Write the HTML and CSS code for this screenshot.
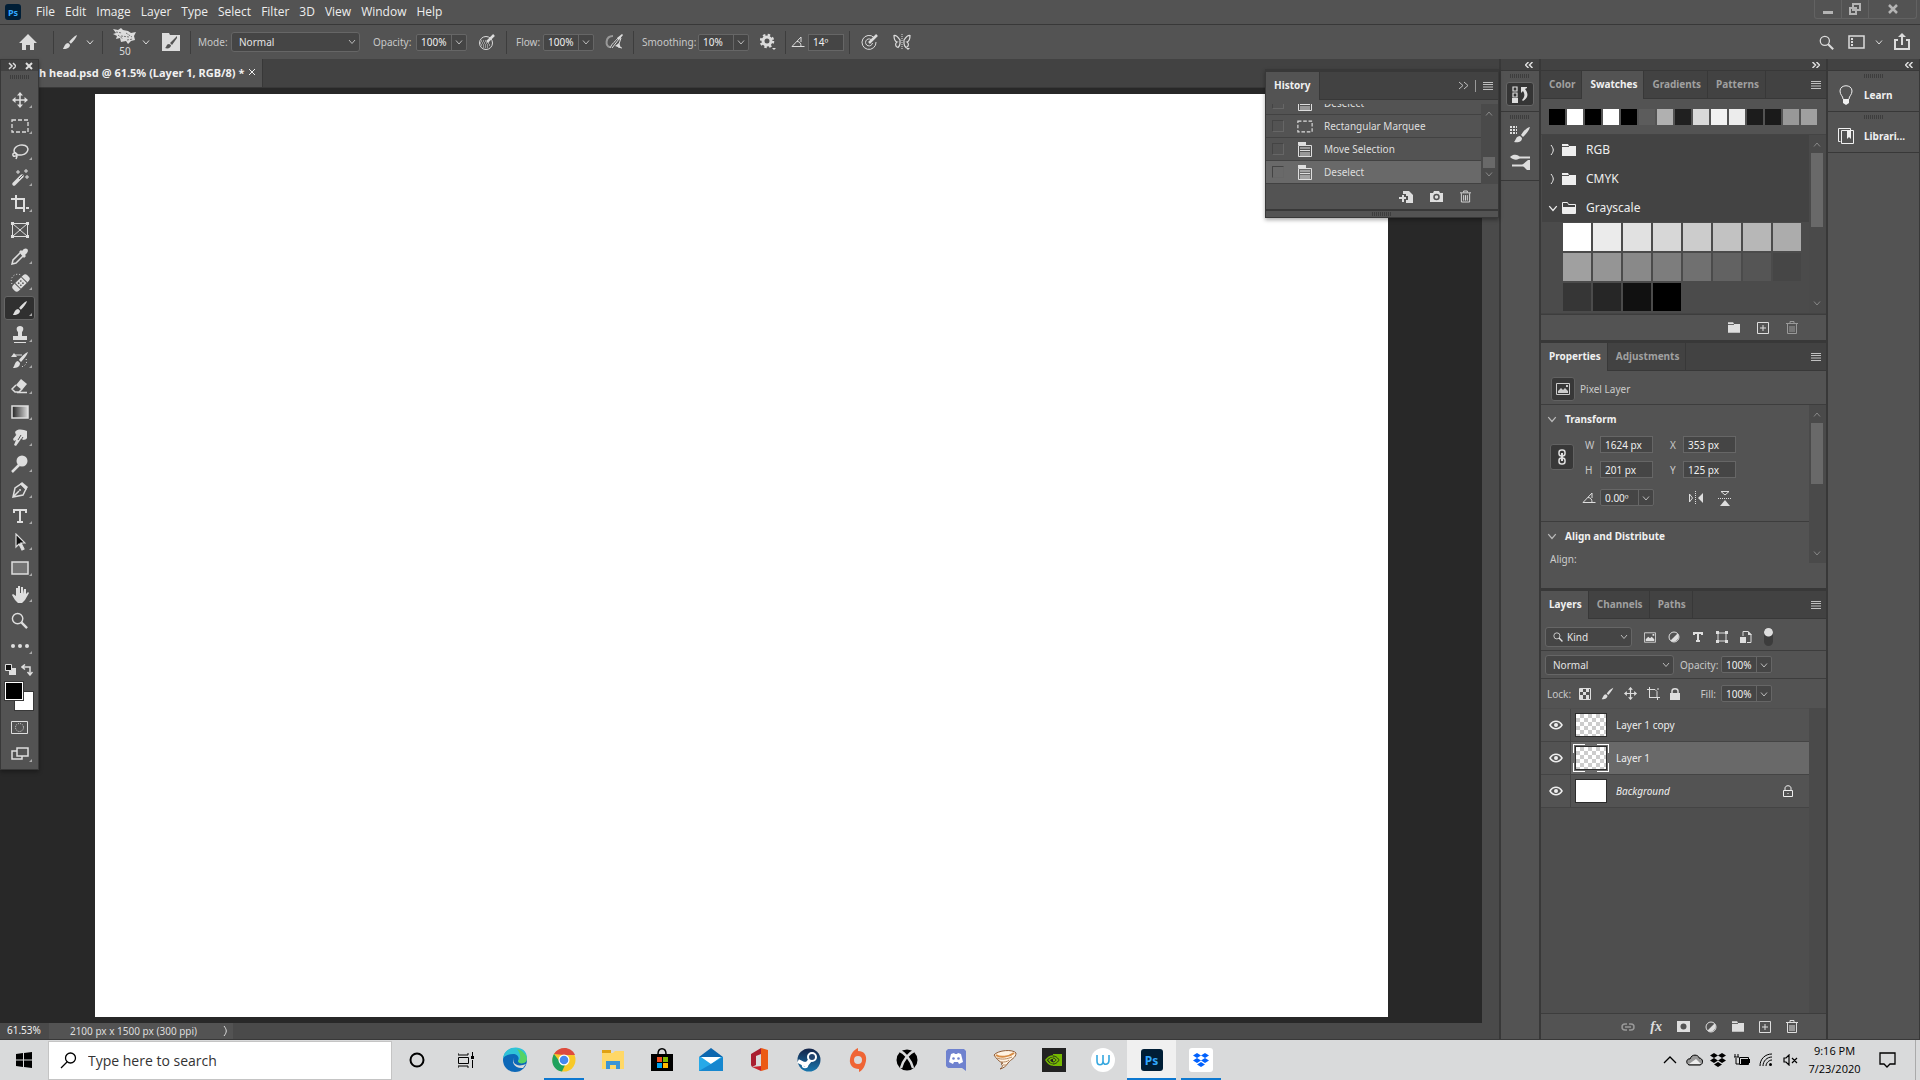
FILE: index.html
```html
<!DOCTYPE html>
<html lang="en">
<head>
    <meta charset="UTF-8">
    <meta name="viewport" content="width=device-width, initial-scale=1.0">
    <title>Photoshop</title>
    <link rel="stylesheet" href="styles.css">
</head>
<body>
    <!-- Shared icons -->
    <svg class="sprite" aria-hidden="true">
        <symbol id="brush" viewBox="0 0 18 18"><path class="solid" d="M17 1c-3 1-7 5-9 8l2 2c3-3 6-7 7-10zM7 10c-2 0-3 1-4 3l-2 4c3 0 8-1 8-5z"/></symbol>
        <symbol id="down" viewBox="0 0 8 8"><path d="M1 2.500l3 3.500 3-3.500"/></symbol>
        <symbol id="up" viewBox="0 0 8 8"><path d="M1 5.500l3-3.500 3 3.500"/></symbol>
        <symbol id="right" viewBox="0 0 8 10"><path d="M2 0c3 4 3 6 0 10"/></symbol>
        <symbol id="menu" viewBox="0 0 10 8"><path d="M0 .5h10M0 2.500h10M0 5h10M0 7.500h10"/></symbol>
        <symbol id="angle" viewBox="0 0 14 12"><path d="M10 1L1 10.500h12.500M6 5.500c3 0 4 2 4 5M10 1v5"/></symbol>
        <symbol id="doc" viewBox="0 0 14 15"><path class="solid" d="M0 0h8v3H0z"/><path d="M.5 3.500h13v11H.5zM2 6h10M2 8.500h10M2 11h10M2 13h10"/></symbol>
        <symbol id="marquee" viewBox="0 0 18 14"><path stroke-width="1.300" stroke-dasharray="4 2" d="M1 1h16v12H1z"/></symbol>
        <symbol id="trash" viewBox="0 0 12 13"><path d="M0 2.500h12M4 2V.5h4V2M1.500 3v9.500h9V3M4 5v6M6 5v6M8 5v6"/></symbol>
        <symbol id="folder" viewBox="0 0 14 12"><path class="solid" d="M0 0h6l1 2h7v10H0z"/><path stroke="#535353" d="M0 2.500h7"/></symbol>
        <symbol id="plus" viewBox="0 0 12 12"><path d="M.5.5h11v11H.5zM6 3v6M3 6h6"/></symbol>
        <symbol id="image" viewBox="0 0 14 12"><path d="M.5.5h13v11H.5z"/><path class="solid" d="M2 10V8l3-3 2 2 2-2 3 3v2zM10 2h2v2h-2z"/></symbol>
        <symbol id="half" viewBox="0 0 12 12"><circle cx="6" cy="6" r="5"/><path class="solid" d="M2.500 9.500l7-7A5 5 0 0 1 2.500 9.500z"/></symbol>
        <symbol id="move" viewBox="0 0 16 16"><path stroke-width="1.500" d="M8 1v14M1 8h14"/><path class="solid" d="M8 0l3 3.500H5zM8 16l3-3.500H5zM0 8l3.500-3v6zM16 8l-3.500-3v6z"/></symbol>
        <symbol id="mag" viewBox="0 0 18 18"><circle cx="7" cy="7" r="5.500" stroke-width="1.500"/><path stroke-width="2.500" d="M11 11l6 6"/></symbol>
        <symbol id="eye" viewBox="0 0 14 10"><path stroke-width="1.500" d="M1 5c3-5 9-5 12 0-3 5-9 5-12 0z"/><circle class="solid" cx="7" cy="5" r="2"/></symbol>
        <symbol id="target" viewBox="0 0 18 18"><path d="M13 4.500A7 7 0 1 0 15 9M10 6.500A3.500 3.500 0 1 0 11.500 10"/><path stroke-width="2.500" d="M8 10l8-8"/></symbol>
        <symbol id="dropbox" viewBox="0 0 16 14"><path class="solid" d="M4 0l4 2.500L4 5 0 2.500zM12 0l4 2.500L12 5 8 2.500zM4 5l4 2.500L4 10 0 7.500zM12 5l4 2.500-4 2.500-4-2.500zM8 9l4 2.500L8 14l-4-2.500z"/></symbol>
    </svg>

    <header class="menubar">
        <span class="ps-logo">Ps</span>
        <nav>
            <button>File</button><button>Edit</button><button>Image</button><button>Layer</button><button>Type</button><button>Select</button><button>Filter</button><button>3D</button><button>View</button><button>Window</button><button>Help</button>
        </nav>
        <div class="window-buttons">
            <button aria-label="Minimize"><svg width="12" height="12"><path stroke-width="3" d="M1 9.500h10"/></svg></button>
            <button aria-label="Restore"><svg width="12" height="12"><path stroke-width="2" d="M4 1h7v6H4zM1 5h6v6H1z"/></svg></button>
            <button class="close" aria-label="Close"><svg width="12" height="12"><path stroke-width="2.500" d="M2 2l8 8M10 2l-8 8"/></svg></button>
        </div>
    </header>

    <div class="options">
        <div class="group home">
            <button aria-label="Home"><svg width="18" height="16"><path class="solid" d="M9 0l9 9h-3v7h-4v-5H7v5H3V9H0z"/></svg></button>
        </div>
        <div class="group preset">
            <button aria-label="Brush tool"><svg width="16" height="16"><use href="#brush"/></svg></button>
            <button aria-label="Presets"><svg width="8" height="8"><use href="#down"/></svg></button>
        </div>
        <div class="group brush-size">
            <button class="tip" aria-label="Brush size"><svg width="26" height="17"><path class="solid" d="M1 1l5 1 3-2 2 2 5 1 3 2 5-1-2 4 1 4-4 1-3 3-2-3-5 1-1-4-4 1 1-3-4-2 3-1z"/><path stroke="#777" stroke-dasharray="2 1" d="M4 4l6 1M9 8l8 1M14 5l6 4M6 7l5 4M15 12l6-1"/></svg><span>50</span></button>
            <button aria-label="Brush picker"><svg width="8" height="8"><use href="#down"/></svg></button>
            <button class="folder-brush" aria-label="Brush settings"><svg width="18" height="18"><path class="solid" d="M0 0h7l1 2h10v16H0z"/><path fill="#535353" stroke="none" d="M15 3L8 10l2 2 5-7zM7 11c-3 0-2 3-4 4 3 1 6 0 6-3z"/></svg></button>
        </div>
        <div class="group mode">
            <label for="mode">Mode:</label>
            <select id="mode" class="drop"><option>Normal</option></select>
            <label for="opacity">Opacity:</label>
            <span class="combo"><input id="opacity" value="100%"><button aria-label="Opacity slider"><svg width="8" height="8"><use href="#down"/></svg></button></span>
            <button aria-label="Pressure opacity"><svg width="18" height="18"><circle cx="8" cy="10" r="6.500"/><path stroke-dasharray="1 1" d="M3 8h8M2 10h10M3 12h10M5 14h6"/><path stroke-width="2.500" d="M9 9l7-7"/></svg></button>
        </div>
        <div class="group flow">
            <label for="flow">Flow:</label>
            <span class="combo"><input id="flow" value="100%"><button aria-label="Flow slider"><svg width="8" height="8"><use href="#down"/></svg></button></span>
            <button aria-label="Airbrush"><svg width="18" height="18"><path stroke="#999" stroke-width="2" d="M8 3C0 3 0 14 5 14"/><path d="M5 15c2-5 5-6 9-11l2 1-3 9 4 1M7 15l7-9"/><path class="solid" d="M12 5l5-4 1 1-4 5zM10 13l4-3 2 5z"/></svg></button>
        </div>
        <div class="group smoothing">
            <label for="smooth">Smoothing:</label>
            <span class="combo"><input id="smooth" value="10%"><button aria-label="Smoothing slider"><svg width="8" height="8"><use href="#down"/></svg></button></span>
            <button aria-label="Smoothing options"><svg width="17" height="18"><circle cx="7" cy="8" r="4" stroke-width="3"/><path stroke-width="2.500" stroke-dasharray="2.400 2.310" d="M13 8A6 6 0 1 1 1 8a6 6 0 0 1 12 0"/><path class="solid" d="M12 15h4l-2 2z"/></svg></button>
        </div>
        <div class="group tilt">
            <svg width="14" height="12"><use href="#angle"/></svg>
            <input class="field" aria-label="Brush angle" value="14º">
        </div>
        <div class="group last">
            <button aria-label="Pressure size"><svg width="18" height="18"><use href="#target"/></svg></button>
            <button aria-label="Symmetry"><svg width="18" height="18"><path stroke-dasharray="1 1" d="M9 1v16"/><path stroke-width="1.200" d="M7 7C5 4 3 2 1 2.500c0 3 1 6 3 6.500-2 1-2 5 1 5.500 1-1 2-2 2-4zM11 7c2-3 4-5 6-4.500 0 3-1 6-3 6.500 2 1 2 5-1 5.500-1-1-2-2-2-4z"/><path class="solid" d="M13 15h4l-2 2z"/></svg></button>
        </div>
        <div class="options-right">
            <button class="find" aria-label="Search"><svg width="15" height="15"><use href="#mag"/></svg></button>
            <button aria-label="Workspace"><svg width="17" height="14"><path stroke-width="1.500" d="M1 1h15v12H1z"/><path stroke-width="2" stroke-dasharray="2 1" d="M4 3v8"/></svg></button>
            <button aria-label="Workspace list"><svg width="8" height="8"><use href="#down"/></svg></button>
            <button aria-label="Share"><svg width="18" height="18"><path stroke-width="2" d="M5 7H2v9h14V7h-3M9 12V3"/><path class="solid" d="M9 0l4 4H5z"/></svg></button>
        </div>
    </div>

    <div class="workspace">
        <main class="document">
            <div class="doc-tabs"><div class="doc-tab">h head.psd @ 61.5% (Layer 1, RGB/8) * <button aria-label="Close document"><svg width="8" height="8"><path d="M1 1l6 6M7 1l-6 6"/></svg></button></div></div>
            <div class="stage-row">
                <div class="stage"><div class="paper"></div></div>
                <div class="stage-scroll"></div>
            </div>
            <div class="status"><span class="zoom">61.53%</span><button>2100 px x 1500 px (300 ppi)<svg width="8" height="10"><use href="#right"/></svg></button></div>

            <aside class="tools">
                <div class="tools-head"><svg width="8" height="8"><path stroke-width="1.500" d="M1 1l3 3-3 3M5 1l3 3-3 3"/></svg><svg width="8" height="8"><path stroke-width="2" d="M1 1l6 6M7 1l-6 6"/></svg></div>
                <div class="grip"></div>
                <button class="tool" aria-label="Move"><svg width="16" height="16"><use href="#move"/></svg></button>
                <button class="tool" aria-label="Marquee"><svg width="18" height="14"><use href="#marquee"/></svg></button>
                <button class="tool" aria-label="Lasso"><svg width="18" height="18"><ellipse cx="10" cy="7" rx="7" ry="5" transform="rotate(-12 10 7)" stroke-width="1.500"/><path stroke-width="1.500" d="M5 10c-4-1-4 4-1 3 3 0 2-2 1-3 2 2 1 4 0 6"/></svg></button>
                <button class="tool" aria-label="Magic wand"><svg width="18" height="18"><path stroke-width="3.500" stroke-linecap="round" d="M3 15l8-8"/><path stroke="#535353" d="M8 10l4-4"/><path d="M7 1v4M5 3h4M15 0v4M13 2h4M16 6v4M14 8h4"/></svg></button>
                <button class="tool" aria-label="Crop"><svg width="18" height="18"><path stroke-width="2" d="M0 4h13v13M5 0v13h8M15 13h3"/></svg></button>
                <button class="tool plain" aria-label="Frame"><svg width="18" height="16"><path d="M1.500 1.500h15v13h-15zM2 2l14 12M16 2L2 14"/><path class="solid" d="M0 0h3v3H0zM15 0h3v3h-3zM0 13h3v3H0zM15 13h3v3h-3z"/></svg></button>
                <button class="tool" aria-label="Eyedropper"><svg width="18" height="18"><path class="solid" d="M8 5l2-2 1 1c3-5 8-2 5 2l-2 2 1 1-2 2z"/><path stroke-width="1.500" d="M9 6l-7 7-1 4 4-1 7-7"/></svg></button>
                <button class="tool" aria-label="Healing brush"><svg width="20" height="20"><path stroke-dasharray="1 2" d="M2 12C-1 6 5 0 11 3"/><g transform="rotate(-45 11 11)"><rect class="solid" x="1" y="7" width="20" height="8" rx="3"/><path stroke="#535353" d="M6.500 7v8M15.500 7v8"/><path stroke="#535353" stroke-width="1.500" stroke-dasharray="1.500 1.500" d="M8.500 9.500h6M8.500 12.500h6"/></g></svg></button>
                <button class="tool active" aria-label="Brush"><svg width="16" height="16"><use href="#brush"/></svg></button>
                <button class="tool" aria-label="Clone stamp"><svg width="16" height="17"><path class="solid" d="M8 0c4 0 4 4 2 6v4h5v4H1v-4h5V6C4 4 4 0 8 0z"/><path d="M2 16.500h12"/></svg></button>
                <button class="tool" aria-label="History brush"><svg width="18" height="18"><path class="solid" d="M17 1c-3 1-7 5-9 8l2 2c3-3 6-7 7-10zM7 10c-3 0-3 4-5 7 4 0 7-1 7-5zM0 6l3-4 3 4z"/><path d="M3 4h8"/><path stroke-dasharray="1 2" d="M15 8c2 4-1 7-5 8"/></svg></button>
                <button class="tool" aria-label="Eraser"><svg width="18" height="16"><path class="solid" d="M10 1l6 5-5 6-6-5z"/><path stroke-width="1.500" d="M5 7l-4 4 3 3h4l3-3M6 14.500h10"/></svg></button>
                <button class="tool" aria-label="Gradient"><svg width="18" height="14"><linearGradient id="grad"><stop stop-color="#222"/><stop offset="1" stop-color="#ddd"/></linearGradient><path fill="url(#grad)" stroke-width="1.500" d="M1 1h16v12H1z"/></svg></button>
                <button class="tool" aria-label="Smudge"><svg width="16" height="18"><path class="solid" d="M3 3c3-4 9-2 12-1v7c-1 2-2 1-3 2l-3-1-5 7-2-1 2-5-2 1-1-2 4-5-1 1z"/><path stroke="#535353" d="M9 6l-3 5M11 8l-2 3"/></svg></button>
                <button class="tool" aria-label="Dodge"><svg width="18" height="18"><circle class="solid" cx="11" cy="6" r="5.500"/><path stroke-width="2.500" d="M8 10l-7 7"/></svg></button>
                <button class="tool" aria-label="Pen"><svg width="18" height="18"><path stroke-width="1.500" d="M10 3l5 5-3 6-10 2 2-9zM2 16l6-6"/><path class="solid" d="M11 1l6 5-2 3-6-6z"/><circle class="solid" cx="9" cy="9" r="1"/></svg></button>
                <button class="tool" aria-label="Type"><svg width="16" height="16"><path stroke-width="2" d="M2 5V2h12v3M8 2v12M5 14h6"/></svg></button>
                <button class="tool" aria-label="Path selection"><svg width="12" height="18"><path fill="#111" stroke-width="1.200" d="M2 1v13l3-3 3 6 2-1-3-6h4z"/><path class="solid" d="M5 11l2-1 3 6-2 1z"/></svg></button>
                <button class="tool" aria-label="Rectangle"><svg width="18" height="14"><path fill="#747474" stroke-width="1.500" d="M1 1h16v12H1z"/></svg></button>
                <button class="tool" aria-label="Hand"><svg width="18" height="18"><path class="solid" d="M4 15L1 10l1-1 3 2V3h2v5V1h2v7h1V2h2v7l1-5h2v5l2-2 1 1-4 7-3 3H7z"/></svg></button>
                <button class="tool plain" aria-label="Zoom"><svg width="17" height="17"><use href="#mag"/></svg></button>
                <button class="tool" aria-label="More tools"><svg width="18" height="4"><g class="solid"><circle cx="2" cy="2" r="2"/><circle cx="9" cy="2" r="2"/><circle cx="16" cy="2" r="2"/></g></svg></button>
                <div class="mini">
                    <svg width="12" height="12"><path class="solid" d="M4 4h7v7H4z"/><path fill="#111" d="M.5.5h6v6h-6z"/></svg>
                    <svg width="12" height="12"><path stroke-width="1.500" d="M2 3h7v7M4 .5L1 3l3 2.500M6.500 8L9 11l2.500-3"/></svg>
                </div>
                <div class="colors"><button class="back" aria-label="Background color"></button><button class="front" aria-label="Foreground color"></button></div>
                <button class="tool plain" aria-label="Quick mask"><svg width="18" height="14"><path d="M.5.5h16v12H.5z"/><circle cx="8.500" cy="6.500" r="4" stroke-dasharray="1 1.100"/></svg></button>
                <button class="tool" aria-label="Screen mode"><svg width="18" height="14"><path stroke-width="1.500" d="M6 4H1v8h10V9M6 1h11v8H6z"/></svg></button>
            </aside>

            <section class="history">
                <div class="tabs"><button class="tab on">History</button><span class="tab-tools"><svg width="10" height="9"><path d="M1 1l4 3.500L1 8M6 1l4 3.500L6 8"/></svg><i></i><button aria-label="Panel menu"><svg width="10" height="8"><use href="#menu"/></svg></button></span></div>
                <div class="history-body">
                    <div class="history-list">
                        <label><input type="checkbox"><svg width="14" height="15"><use href="#doc"/></svg>Deselect</label>
                        <label><input type="checkbox"><svg width="16" height="13"><use href="#marquee"/></svg>Rectangular Marquee</label>
                        <label><input type="checkbox"><svg width="14" height="15"><use href="#doc"/></svg>Move Selection</label>
                        <label class="on"><input type="checkbox"><svg width="14" height="15"><use href="#doc"/></svg>Deselect</label>
                    </div>
                    <div class="scroll"><svg width="8" height="8"><use href="#up"/></svg><span class="thumb low"></span><svg width="8" height="8"><use href="#down"/></svg></div>
                </div>
                <div class="history-foot">
                    <button aria-label="New document"><svg width="14" height="12"><path class="solid" d="M4 0h6l4 4v8H7V9h2V5H7V3H4z"/><path stroke-width="2" d="M0 7h7M4 4v7"/></svg></button>
                    <button aria-label="Snapshot"><svg width="13" height="11"><path class="solid" d="M0 2h3l1-2h5l1 2h3v9H0z"/><circle cx="6.500" cy="6" r="2.500" stroke="#535353" stroke-width="1.500"/></svg></button>
                    <button aria-label="Delete"><svg width="11" height="13"><use href="#trash"/></svg></button>
                </div>
                <div class="resize"><div class="grip"></div></div>
            </section>
        </main>

        <aside class="dock icon-dock">
            <div class="dock-head"><svg width="8" height="6"><path stroke-width="1.500" d="M3.500 0l-3 3 3 3M7.500 0l-3 3 3 3"/></svg></div>
            <div class="dock-box one">
                <div class="grip"></div>
                <button class="on" aria-label="History"><svg width="16" height="17"><path stroke-width="1.200" d="M1 1h4v4H1zM1 7h4v4H1z"/><path class="solid" d="M0 12h6v5H0zM9 1h6v1l-2 1c4 5 3 9-2 12l-1-1c3-3 3-6 1-9l-2 2z"/></svg></button>
            </div>
            <div class="dock-box two">
                <div class="grip"></div>
                <button aria-label="Brushes"><svg width="20" height="18"><path stroke-width="2" stroke-dasharray="2 1" d="M0 2h7M0 5h7M0 8h7"/><path class="solid" d="M20 2c-4 1-7 5-9 8l2 2c3-3 6-6 7-10zM10 11c-4 0-4 4-6 6 4 1 8 0 8-4z"/></svg></button>
                <button aria-label="Brush settings"><svg width="20" height="16"><path stroke-width="2" d="M9 3.500h11M2 11.500h12"/><path class="solid" d="M0 3c4-4 9-2 10 .5C9 6 4 7 0 3zM12 11l6-5h2v11h-2z"/></svg></button>
            </div>
        </aside>

        <aside class="dock panel-dock">
            <div class="dock-head"><svg width="8" height="6"><path stroke-width="1.500" d="M.5 0l3 3-3 3M4.500 0l3 3-3 3"/></svg></div>
            <section class="swatches">
                <div class="tabs"><button class="tab">Color</button><button class="tab on">Swatches</button><button class="tab">Gradients</button><button class="tab">Patterns</button><span class="tab-tools"><button aria-label="Panel menu"><svg width="10" height="8"><use href="#menu"/></svg></button></span></div>
                <div class="recent">
                    <i style="background:#000"></i><i style="background:#fff"></i><i style="background:#000"></i><i style="background:#fff"></i><i style="background:#000"></i><i style="background:#5c5c5c"></i><i style="background:#b0b0b0"></i><i style="background:#202020"></i><i style="background:#d9d9d9"></i><i style="background:#f2f2f2"></i><i style="background:#ececec"></i><i style="background:#1c1c1c"></i><i style="background:#1a1a1a"></i><i style="background:#989898"></i><i style="background:#a0a0a0"></i>
                </div>
                <div class="swatch-body">
                    <div class="swatch-list">
                        <button class="set"><svg class="arrow" width="8" height="10"><use href="#right"/></svg><svg width="14" height="12"><use href="#folder"/></svg>RGB</button>
                        <button class="set"><svg class="arrow" width="8" height="10"><use href="#right"/></svg><svg width="14" height="12"><use href="#folder"/></svg>CMYK</button>
                        <button class="set"><svg class="arrow" width="10" height="10"><use href="#down"/></svg><svg width="14" height="12"><path d="M.5.5h5l1 2h7v9H.5z"/><path class="solid" d="M1 5h12v6H1z"/></svg>Grayscale</button>
                        <div class="grays">
                            <i style="background:#fff"></i><i style="background:#ebebeb"></i><i style="background:#e1e1e1"></i><i style="background:#d7d7d7"></i><i style="background:#cccccc"></i><i style="background:#c2c2c2"></i><i style="background:#b7b7b7"></i><i style="background:#acacac"></i>
                            <i style="background:#a0a0a0"></i><i style="background:#959595"></i><i style="background:#898989"></i><i style="background:#7d7d7d"></i><i style="background:#707070"></i><i style="background:#626262"></i><i style="background:#555555"></i><i style="background:#464646"></i>
                            <i style="background:#363636"></i><i style="background:#262626"></i><i style="background:#111111"></i><i style="background:#000"></i>
                        </div>
                    </div>
                    <div class="scroll"><svg width="8" height="8"><use href="#up"/></svg><span class="thumb tall"></span><svg width="8" height="8"><use href="#down"/></svg></div>
                </div>
                <div class="panel-foot">
                    <button aria-label="New group"><svg width="12" height="11"><use href="#folder"/></svg></button>
                    <button aria-label="New swatch"><svg width="12" height="12"><use href="#plus"/></svg></button>
                    <button class="off" aria-label="Delete swatch"><svg width="12" height="13"><use href="#trash"/></svg></button>
                </div>
            </section>

            <section class="properties">
                <div class="tabs"><button class="tab on">Properties</button><button class="tab">Adjustments</button><span class="tab-tools"><button aria-label="Panel menu"><svg width="10" height="8"><use href="#menu"/></svg></button></span></div>
                <div class="layer-kind"><span class="kind-box"><svg width="14" height="12"><use href="#image"/></svg></span>Pixel Layer</div>
                <div class="props-body">
                    <div class="props-main">
                        <div class="transform">
                            <h3><svg width="10" height="10"><use href="#down"/></svg>Transform</h3>
                            <div class="dims">
                                <button class="link" aria-label="Link dimensions"><svg width="10" height="16"><rect x="2" y="1" width="6" height="6" rx="2.500" stroke-width="1.500"/><rect x="2" y="9" width="6" height="6" rx="2.500" stroke-width="1.500"/><path stroke-width="2" d="M5 4v8"/></svg></button>
                                <div class="dim-grid">
                                    <label for="w">W</label><input id="w" class="field" value="1624 px">
                                    <label for="x">X</label><input id="x" class="field" value="353 px">
                                    <label for="h">H</label><input id="h" class="field" value="201 px">
                                    <label for="y">Y</label><input id="y" class="field" value="125 px">
                                </div>
                            </div>
                            <div class="rotate">
                                <svg width="14" height="12"><use href="#angle"/></svg>
                                <span class="combo"><input aria-label="Rotation" value="0.00º"><button aria-label="Rotation list"><svg width="8" height="8"><use href="#down"/></svg></button></span>
                                <button aria-label="Flip horizontal"><svg width="16" height="14"><path d="M1.500 3l3 4-3 4z"/><path stroke-dasharray="1 1" d="M7.500 0v14"/><path class="solid" d="M15 2v10l-5-5z"/></svg></button>
                                <button aria-label="Flip vertical"><svg width="14" height="16"><path d="M3 1.500h8L7 5z"/><path stroke-dasharray="1 1" d="M0 8.500h14"/><path class="solid" d="M2 16l5-6 5 6z"/></svg></button>
                            </div>
                        </div>
                        <h3><svg width="10" height="10"><use href="#down"/></svg>Align and Distribute</h3>
                        <p>Align:</p>
                    </div>
                    <div class="scroll"><svg width="8" height="8"><use href="#up"/></svg><span class="thumb mid"></span><svg width="8" height="8"><use href="#down"/></svg></div>
                </div>
            </section>

            <section class="layers">
                <div class="tabs"><button class="tab on">Layers</button><button class="tab">Channels</button><button class="tab">Paths</button><span class="tab-tools"><button aria-label="Panel menu"><svg width="10" height="8"><use href="#menu"/></svg></button></span></div>
                <div class="layer-row filters">
                    <span class="kind-wrap"><svg width="10" height="10"><use href="#mag"/></svg><select class="drop kind" aria-label="Filter kind"><option>Kind</option></select></span>
                    <div class="filter-icons">
                        <button aria-label="Pixel"><svg width="12" height="11"><use href="#image"/></svg></button>
                        <button aria-label="Adjustment"><svg width="12" height="12"><use href="#half"/></svg></button>
                        <button aria-label="Type layers"><svg width="12" height="12"><path stroke-width="2" d="M2 4V2h8v2M6 2v8M4 10h4"/></svg></button>
                        <button aria-label="Shape"><svg width="12" height="12"><path d="M2 2h8v8H2z"/><path class="solid" d="M0 0h3v3H0zM9 0h3v3H9zM0 9h3v3H0zM9 9h3v3H9z"/></svg></button>
                        <button aria-label="Smart object"><svg width="12" height="12"><path d="M3 5V.5h5l3 3v8H7"/><path class="solid" d="M0 6h6v6H0zM8 0v4h4z"/></svg></button>
                        <button class="toggle" aria-label="Filter on"></button>
                    </div>
                </div>
                <div class="layer-row blend">
                    <select class="drop" aria-label="Blend mode"><option>Normal</option></select>
                    <label for="lop">Opacity:</label>
                    <span class="combo"><input id="lop" value="100%"><button aria-label="Opacity list"><svg width="8" height="8"><use href="#down"/></svg></button></span>
                </div>
                <div class="layer-row lock">
                    <span class="lock-label">Lock:</span>
                    <div class="lock-icons">
                        <button aria-label="Lock transparency"><svg width="12" height="12"><path d="M.5.5h11v11H.5z"/><path class="solid" d="M1 1h3v3H1zM7 1h3v3H7zM4 4h3v3H4zM1 7h3v4H1zM7 7h3v4H7z"/></svg></button>
                        <button aria-label="Lock pixels"><svg width="13" height="13"><use href="#brush"/></svg></button>
                        <button aria-label="Lock position"><svg width="13" height="13"><use href="#move"/></svg></button>
                        <button aria-label="Lock nesting"><svg width="13" height="13"><path d="M0 2.500h8l2 2v6H2.500V0M2 10.500h11M10.500 10v3M10 2h2"/></svg></button>
                        <button aria-label="Lock all"><svg width="10" height="12"><path class="solid" d="M0 5h10v7H0z"/><path stroke-width="1.500" d="M2 5V3c0-3 6-3 6 0v2"/></svg></button>
                    </div>
                    <label for="fill">Fill:</label>
                    <span class="combo"><input id="fill" value="100%"><button aria-label="Fill list"><svg width="8" height="8"><use href="#down"/></svg></button></span>
                </div>
                <div class="layer-body">
                    <div class="layer-list">
                        <div class="layer"><button class="eye" aria-label="Visible"><svg width="14" height="10"><use href="#eye"/></svg></button><div class="layer-main"><span class="thumbnail checks"></span>Layer 1 copy</div></div>
                        <div class="layer on"><button class="eye" aria-label="Visible"><svg width="14" height="10"><use href="#eye"/></svg></button><div class="layer-main"><span class="thumbnail checks"></span>Layer 1</div></div>
                        <div class="layer"><button class="eye" aria-label="Visible"><svg width="14" height="10"><use href="#eye"/></svg></button><div class="layer-main"><span class="thumbnail"></span><em>Background</em><svg class="locked" width="10" height="12"><path d="M.5 5.500h9v6h-9zM2 5V3c0-3 6-3 6 0v2M5 8v1"/></svg></div></div>
                    </div>
                    <div class="layer-scroll"></div>
                </div>
                <div class="panel-foot layer-foot">
                    <button class="off" aria-label="Link layers"><svg width="14" height="8"><path stroke-width="1.500" d="M6 1H4C0 1 0 7 4 7h2M8 1h2c4 0 4 6 0 6H8M4 4h6"/></svg></button>
                    <button class="fx">fx</button>
                    <button aria-label="Mask"><svg width="13" height="11"><path class="solid" d="M0 0h13v11H0z"/><circle cx="6.500" cy="5.500" r="3" fill="#535353" stroke="none"/></svg></button>
                    <button aria-label="Adjustment layer"><svg width="12" height="12"><use href="#half"/></svg></button>
                    <button aria-label="Group"><svg width="12" height="11"><use href="#folder"/></svg></button>
                    <button aria-label="New layer"><svg width="12" height="12"><use href="#plus"/></svg></button>
                    <button aria-label="Delete layer"><svg width="12" height="13"><use href="#trash"/></svg></button>
                </div>
            </section>
        </aside>

        <aside class="dock far-dock">
            <div class="dock-head"><svg width="8" height="6"><path stroke-width="1.500" d="M3.500 0l-3 3 3 3M7.500 0l-3 3 3 3"/></svg></div>
            <div class="dock-box one"><div class="grip"></div><button><svg width="16" height="20"><path d="M5 14c0-3-3-4-3-8 0-7 12-7 12 0 0 4-3 5-3 8"/><path class="solid" d="M5 14h6v4l-3 2-3-2z"/></svg>Learn</button></div>
            <div class="dock-box one"><div class="grip"></div><button><svg width="16" height="16"><path d="M2.500 13.500h-2V.5h12v2M3.500 2.500h12v13h-12z"/><path class="solid" d="M9 3h4v8l-2-2-2 2z"/></svg>Librari...</button></div>
        </aside>
    </div>

    <footer class="taskbar">
        <button class="start" aria-label="Start"><svg width="16" height="16"><path class="solid" d="M0 2l7-1v6.500H0zM8 1l8-1v7.500H8zM0 8.500h7V15l-7-1zM8 8.500h8V16l-8-1z"/></svg></button>
        <label class="search"><svg width="17" height="17"><circle cx="10.500" cy="6" r="5" stroke-width="1.300"/><path stroke-width="1.300" d="M7 10l-6 6"/></svg><input placeholder="Type here to search"></label>
        <div class="apps">
            <button aria-label="Cortana"><svg width="16" height="16"><circle cx="8" cy="8" r="6.500" stroke-width="2"/></svg></button>
            <button aria-label="Task view"><svg width="16" height="16"><path d="M0 1v2h10V1M.5 5.500h10v6H.5zM0 16v-2h10v2M14.500 0v4M14.500 8v8"/><path class="solid" d="M13 4h3v3h-3z"/></svg></button>
            <button aria-label="Edge"><svg width="26" height="26"><circle cx="13" cy="13" r="12" fill="#0c68b8" stroke="none"/><path fill="#2fc3d8" stroke="none" d="M1 12C2-3 25-3 25 11c0 6-8 6-9 3 2-4-1-7-5-7-5 0-9 2-10 5z"/><path fill="#56d364" stroke="none" d="M15 2c9 2 13 12 7 14-3 1-6 0-6-2 4-3 2-8-1-12z"/><path fill="#d9dadb" stroke="none" d="M13 10c-4 4 0 10 8 8l3-1-3 4c-8 1-13-6-8-11z"/></svg></button>
            <button class="running" aria-label="Chrome"><svg width="24" height="24"><g stroke="none"><circle cx="12" cy="12" r="11.500" fill="#f8c928"/><path fill="#dd4b3e" d="M2 6c5-8 17-8 21 1H12z"/><path fill="#1fa15d" d="M2 6l6 8 5 3-3 6.500C1 22-2 13 2 6z"/><circle cx="12" cy="12" r="5.500" fill="#fff"/><circle cx="12" cy="12" r="4.300" fill="#4688ee"/></g></svg></button>
            <button aria-label="File Explorer"><svg width="24" height="20"><g stroke="none"><path fill="#e0a213" d="M1 0h9v4H1z"/><path fill="#ffd867" d="M1 3h11l2-2h9v18H1z"/><path fill="#3c95d5" d="M5 19v-8h14v8h-4v-4H9v4z"/></g></svg></button>
            <button aria-label="Store"><svg width="24" height="24"><path stroke-width="1.500" d="M8 6c0-7 8-7 8 0"/><path class="solid" d="M1 6h22v17H1z"/><g stroke="none"><path fill="#f25022" d="M7 9h5v5H7z"/><path fill="#7fba00" d="M13 9h5v5h-5z"/><path fill="#00a4ef" d="M7 15h5v5H7z"/><path fill="#ffb900" d="M13 15h5v5h-5z"/></g></svg></button>
            <button aria-label="Mail"><svg width="24" height="24"><g stroke="none"><path fill="#0c67af" d="M0 9l12-9 12 9z"/><path fill="#27a9e8" d="M0 9h24v14H0z"/><path fill="#fff" d="M2 9h20l-10 7z"/><path fill="#1687cf" d="M0 23L24 9v14z"/></g></svg></button>
            <button aria-label="Office"><svg width="20" height="24"><g stroke="none"><path fill="#a91e30" d="M1 6l10-6v6L6 8v9l-4 2-1-2z"/><path fill="#ec5a13" d="M11 0l7 2v19l-7 2z"/><path fill="#c7252f" d="M2 19l9-1v5z"/></g></svg></button>
            <button aria-label="Steam"><svg width="24" height="24"><defs><linearGradient id="steam" x2="0" y2="1"><stop stop-color="#142348"/><stop offset="1" stop-color="#1877ae"/></linearGradient></defs><circle cx="12" cy="12" r="11.500" fill="url(#steam)" stroke="none"/><path stroke="#fff" stroke-width="4" d="M1 13l8 4 6-7"/><circle cx="15" cy="9" r="4" fill="#23456f" stroke="#fff" stroke-width="2"/><circle cx="8" cy="17" r="2.500" stroke="#fff" stroke-width="1.500"/></svg></button>
            <button aria-label="Origin"><svg width="20" height="24"><path stroke="none" fill="#ef6535" fill-rule="evenodd" d="M10 0v3c6 0 9 4 8 10-1 5-3 9-7 11v-3C5 21 1 17 2 11 3 5 6 2 10 0zM10 8a4 4 0 1 0 0 8 4 4 0 0 0 0-8z"/></svg></button>
            <button aria-label="Xbox"><svg width="24" height="24"><circle class="solid" cx="12" cy="12" r="10.500"/><path stroke="#d9dadb" stroke-width="2.500" d="M5 3c5 2 11 9 13 17M19 3C14 5 8 12 6 20"/></svg></button>
            <button aria-label="Discord"><svg width="20" height="22"><path fill="#6f82cf" stroke="none" d="M2 0h16l2 2v20l-4-3H2l-2-2V2z"/><path fill="#fff" stroke="none" d="M5 5l3-1 1 1h2l1-1 3 1 2 8-4 2-1-2H8l-1 2-4-2z"/><circle cx="7.500" cy="9.500" r="1.300" fill="#6f82cf" stroke="none"/><circle cx="12.500" cy="9.500" r="1.300" fill="#6f82cf" stroke="none"/></svg></button>
            <button aria-label="Tornado"><svg width="24" height="20"><path fill="#fff3e3" stroke="#8d5b36" d="M1 5C5 0 20-1 23 3c0 5-5 6-8 10-2 3-4 5-8 6 3-2 3-4 1-5l2-1c-4-1-7-5-9-8z"/><path stroke="#d78c45" stroke-width="2" d="M3 5c4 3 13 2 18-2"/><path stroke="#b98a62" d="M4 8c5 2 10 1 15-1M8 12c4 0 6 0 8-2M10 15h4"/></svg></button>
            <button aria-label="Nvidia"><svg width="24" height="24"><path fill="#222" stroke="none" d="M0 0h24v24H0z"/><path fill="#76b900" stroke="none" d="M11 6h9v12h-9z"/><path stroke="#76b900" stroke-width="1.500" d="M11 8C7 8 4 12 4 12s3 5 7 5M11 10c-2 0-4 2-4 2s2 3 4 3"/><path stroke="#222" d="M11 8c4 0 6 4 6 4s-2 4-6 4M11 10c2 0 3 2 3 2s-1 2-3 2"/></svg></button>
            <button aria-label="Wacom"><svg width="24" height="24"><circle cx="12" cy="12" r="12" fill="#fff" stroke="none"/><path stroke="#35a7df" stroke-width="1.600" d="M6 7v6c0 5 6 5 6 0V7M12 13c0 5 6 4 6-1V7"/></svg></button>
            <button class="running current" aria-label="Photoshop"><span class="ps-logo">Ps</span></button>
            <button class="running" aria-label="Dropbox"><span class="dropbox"><svg width="16" height="14"><use href="#dropbox"/></svg></span></button>
        </div>
        <div class="tray">
            <button aria-label="Hidden icons"><svg width="14" height="8"><path stroke-width="1.300" d="M1 7l6-6 6 6"/></svg></button>
            <button aria-label="OneDrive"><svg width="17" height="12"><path fill="#999" d="M3 11C-1 9 1 4 4 5c2-6 9-4 9-1 4 0 5 6 1 7z"/><path fill="#eee" stroke="none" d="M3 10l7-5 5 5z"/></svg></button>
            <button aria-label="Dropbox tray"><svg width="16" height="14"><use href="#dropbox"/></svg></button>
            <button aria-label="Battery"><svg width="17" height="12"><path d="M5.500 3.500h9v7h-9zM15.500 5v4M2 4v6h3M0 3h5M1 0v3M4 0v3"/><path class="solid" d="M7 5h7v5H7z"/></svg></button>
            <button aria-label="Wi-Fi"><svg width="14" height="14"><path d="M1 13C1 6 6 1 13 1M4 13c0-5 4-9 9-9M7 13c0-3 3-6 6-6"/><circle class="solid" cx="11.500" cy="11.500" r="1.500"/></svg></button>
            <button aria-label="Muted"><svg width="15" height="12"><path stroke-width="1.200" d="M1 4h2l3-3v10L3 8H1zM9 4l5 5M14 4L9 9"/></svg></button>
            <button class="clock"><span>9:16 PM</span><span>7/23/2020</span></button>
            <button class="notes" aria-label="Notifications"><svg width="17" height="17"><path stroke-width="1.300" d="M1 1h15v11h-5l-3 3-3-3H1z"/></svg></button>
        </div>
    </footer>
</body>
</html>
```
FILE: styles.css
```css
* {
    box-sizing: border-box;
}

body {
    margin: 0;
    height: 100vh;
    display: flex;
    flex-direction: column;
    overflow: hidden;
    background: #383838;
    color: #dedede;
    font-family: "Noto Sans", sans-serif;
    font-size: 10px;
}

.sprite {
    position: absolute;
    width: 0;
    height: 0;
}

svg {
    display: block;
    flex: none;
    fill: none;
    stroke: currentColor;
}

.solid {
    fill: currentColor;
    stroke: none;
}

button, input, select {
    margin: 0;
    padding: 0;
    border: 0;
    background: none;
    color: inherit;
    font: inherit;
}

button {
    display: flex;
    align-items: center;
    justify-content: center;
}

/* Menu bar */
.menubar {
    display: flex;
    align-items: flex-start;
    height: 24px;
    padding-left: 5px;
    background: #535353;
}

.ps-logo {
    display: flex;
    align-items: center;
    justify-content: center;
    width: 16px;
    height: 16px;
    margin-top: 4px;
    border-radius: 3px;
    background: #001e36;
    color: #31a8ff;
    font-size: 9px;
    font-weight: bold;
}

.menubar nav {
    display: flex;
    gap: 10px;
    height: 22px;
    padding-left: 15px;
    color: #eee;
    font-family: "Open Sans", sans-serif;
    font-size: 12px;
}

.window-buttons {
    display: flex;
    height: 19px;
    margin-left: auto;
    margin-right: 3px;
    border: 1px solid #626262;
    border-top: 0;
    border-radius: 0 0 3px 3px;
    color: #b4b4b4;
}

.window-buttons button {
    width: 27px;
    border-right: 1px solid #626262;
}

.window-buttons .close {
    width: 47px;
    border: 0;
}

/* Options bar */
.options {
    display: flex;
    align-items: center;
    height: 34px;
    margin-top: 1px;
    background: #535353;
    color: #dcdcdc;
}

.group {
    display: flex;
    align-items: center;
    flex: none;
    height: 23px;
    border-right: 1px solid #3d3d3d;
}

.group label, .blend label, .lock label, .lock-label, .dim-grid label {
    color: #c8c8c8;
}

.home {
    width: 54px;
    padding-left: 19px;
}

.preset {
    width: 49px;
    padding-left: 8px;
    gap: 8px;
}

.brush-size {
    width: 88px;
    padding-left: 9px;
    gap: 4px;
}

.tip {
    flex-direction: column;
    line-height: 12px;
}

.folder-brush {
    margin-left: 8px;
}

.mode {
    width: 316px;
    padding-left: 7px;
}

.mode label {
    width: 33px;
}

.mode .drop {
    width: 129px;
    margin-right: 13px;
}

.mode .drop + label {
    width: 43px;
}

.mode > button, .flow > button, .smoothing > button {
    margin-left: 11px;
}

.flow {
    width: 127px;
    padding-left: 9px;
}

.flow label {
    width: 27px;
}

.smoothing {
    width: 152px;
    padding-left: 8px;
}

.smoothing label {
    width: 56px;
}

.tilt {
    width: 64px;
    padding-left: 5px;
    gap: 3px;
}

.tilt .field {
    width: 36px;
}

.last {
    gap: 14px;
    padding-left: 11px;
    border: 0;
}

.options-right {
    display: flex;
    align-items: center;
    gap: 10px;
    margin-left: auto;
    padding-right: 9px;
}

.find {
    margin-right: 4px;
}

.drop {
    height: 20px;
    padding: 0 20px 0 7px;
    appearance: none;
    border: 1px solid #666;
    border-radius: 3px;
    background: #454545 url("data:image/svg+xml,%3Csvg xmlns='http://www.w3.org/2000/svg' width='8' height='6'%3E%3Cpath d='M1 1l3 3.500 3-3.500' fill='none' stroke='%23bbb'/%3E%3C/svg%3E") no-repeat right 3px center;
    color: #e4e4e4;
}

.combo {
    display: flex;
    flex: none;
    width: 51px;
    height: 17px;
    border: 1px solid #666;
    border-radius: 2px;
    background: #454545;
    color: #f0f0f0;
}

.combo input {
    flex: 1;
    width: 0;
    padding-left: 4px;
}

.combo button {
    width: 15px;
    border-left: 1px solid #666;
    color: #bbb;
}

.field {
    width: 53px;
    height: 17px;
    padding-left: 4px;
    border: 1px solid #666;
    background: #454545;
    color: #f0f0f0;
}

/* Workspace */
.workspace {
    display: flex;
    flex: 1;
    gap: 2px;
    min-height: 0;
    padding: 0 1px 1px 0;
}

.document {
    position: relative;
    display: flex;
    flex: 1;
    flex-direction: column;
    min-width: 0;
}

.doc-tabs {
    display: flex;
    height: 29px;
    background: #424242;
    border-bottom: 1px solid #383838;
}

.doc-tab {
    display: flex;
    align-items: center;
    gap: 4px;
    width: 263px;
    padding: 0 0 2px 39px;
    border-right: 1px solid #383838;
    background: #535353;
    color: #f0f0f0;
    font-size: 11px;
    font-weight: bold;
    white-space: nowrap;
}

.stage-row {
    display: flex;
    flex: 1;
}

.stage {
    display: flex;
    flex: 1;
    padding: 6px 94px 6px 95px;
    background: #282828;
}

.paper {
    flex: 1;
    background: #fff;
}

.stage-scroll {
    width: 17px;
    background: #4a4a4a;
}

.status {
    display: flex;
    height: 16px;
    background: #4a4a4a;
}

.zoom {
    width: 49px;
    padding-left: 7px;
    color: #f0f0f0;
}

.status button {
    width: 184px;
    gap: 25px;
    padding-left: 18px;
    background: #535353;
}

.grip {
    width: 20px;
    height: 4px;
    background: repeating-linear-gradient(90deg, #3d3d3d 0 1px, transparent 1px 2px);
}

/* Tools */
.tools {
    position: absolute;
    top: 0;
    left: 0;
    display: flex;
    flex-direction: column;
    align-items: center;
    width: 39px;
    padding-bottom: 2px;
    border: 1px solid #383838;
    background: #535353;
    box-shadow: 0 2px 4px #0005;
}

.tools-head {
    display: flex;
    align-items: center;
    justify-content: space-between;
    width: 100%;
    height: 11px;
    padding: 0 5px 0 7px;
    background: #424242;
}

.tools .grip {
    margin: 4px 0 8px;
}

.tool {
    position: relative;
    width: 31px;
    height: 24px;
    margin: 1px 0;
    border: 1px solid transparent;
    border-radius: 3px;
}

.tool::after {
    content: "";
    position: absolute;
    right: 2px;
    bottom: 3px;
    border-left: 3px solid transparent;
    border-bottom: 3px solid #aaa;
}

.tool.plain::after {
    display: none;
}

.tool.active {
    border-color: #666;
    background: #303030;
}

.mini {
    display: flex;
    justify-content: space-between;
    align-self: flex-start;
    width: 32px;
    padding: 5px 0 5px 4px;
}

.colors {
    position: relative;
    align-self: flex-start;
    width: 30px;
    height: 34px;
    margin-left: 3px;
}

.front, .back {
    position: absolute;
    width: 20px;
    height: 20px;
    border: 1px solid #383838;
}

.front {
    top: 0;
    left: 0;
    background: #000;
    box-shadow: inset 0 0 0 1px #fff;
}

.back {
    top: 10px;
    left: 10px;
    background: #fff;
}

/* Panels */
.tabs {
    display: flex;
    flex: none;
    height: 28px;
    border-bottom: 1px solid #383838;
    background: #424242;
}

.tab {
    padding: 0 6px 2px 8px;
    border-right: 1px solid #383838;
    color: #a0a0a0;
    font-weight: bold;
}

.tab.on {
    height: 28px;
    background: #535353;
    color: #f0f0f0;
}

.tab-tools {
    display: flex;
    align-items: center;
    gap: 7px;
    margin-left: auto;
    padding-right: 5px;
    color: #c0c0c0;
}

.tab-tools i {
    width: 1px;
    height: 12px;
    background: #999;
}

.scroll {
    display: flex;
    flex: none;
    flex-direction: column;
    align-items: center;
    width: 17px;
    padding: 6px 1px 6px 0;
    background: #4a4a4a;
    color: #888;
}

.scroll svg:last-child {
    margin-top: auto;
}

.thumb {
    width: 12px;
    margin-top: 4px;
    background: #696969;
}

.thumb.low {
    height: 11px;
    margin-top: 39px;
}

.thumb.tall {
    height: 74px;
}

.thumb.mid {
    height: 61px;
}

.history {
    position: absolute;
    top: 10px;
    right: 0;
    width: 234px;
    border: 1px solid #383838;
    border-top-width: 3px;
    background: #535353;
    box-shadow: 0 2px 4px #0005;
}

.history .tab {
    padding: 0 9px 2px 8px;
}

.history-body {
    display: flex;
    height: 80px;
    margin-top: 4px;
}

.history-list {
    display: flex;
    flex: 1;
    flex-direction: column;
    justify-content: flex-end;
    overflow: hidden;
}

.history-list label {
    display: flex;
    flex: none;
    align-items: center;
    gap: 11px;
    height: 23px;
    padding-left: 6px;
    border-bottom: 1px solid #424242;
}

.history-list svg {
    width: 16px;
}

.history-list .on {
    background: #696969;
}

.history-list input {
    width: 12px;
    height: 12px;
    margin-right: 2px;
    appearance: none;
    border: 1px solid #666;
    border-top-color: #444;
    border-left-color: #444;
}

.history-foot {
    display: flex;
    justify-content: flex-end;
    gap: 17px;
    height: 25px;
    padding-right: 27px;
}

.resize {
    display: flex;
    justify-content: center;
    padding: 1px;
    border-top: 2px solid #383838;
}

.dock {
    display: flex;
    flex: none;
    flex-direction: column;
    background: #535353;
}

.icon-dock {
    width: 38px;
}

.panel-dock {
    width: 285px;
}

.far-dock {
    width: 91px;
}

.dock-head {
    display: flex;
    align-items: center;
    justify-content: flex-end;
    flex: none;
    height: 12px;
    padding-right: 6px;
    border-bottom: 1px solid #383838;
    background: #424242;
}

.dock-box {
    display: flex;
    flex-direction: column;
    align-items: center;
    padding-top: 3px;
    border-bottom: 1px solid #383838;
}

.dock-box.one {
    height: 41px;
}

.dock-box.two {
    height: 69px;
}

.dock-box.two .grip {
    margin-bottom: 1px;
}

.icon-dock button {
    width: 28px;
    height: 28px;
}

.icon-dock .one button {
    height: 24px;
    margin-top: 4px;
    border: 1px solid #666;
    border-radius: 3px;
    background: #353535;
}

.far-dock button {
    width: 100%;
    gap: 10px;
    justify-content: flex-start;
    height: 28px;
    margin-top: 3px;
    padding-left: 10px;
    color: #f0f0f0;
    font-weight: bold;
}

.recent {
    display: flex;
    gap: 2px;
    padding: 10px 8px 9px;
}

.recent i {
    width: 16px;
    height: 16px;
}

.swatch-body {
    display: flex;
    height: 180px;
    border-top: 1px solid #444;
    border-bottom: 1px solid #444;
}

.swatch-list {
    flex: 1;
    padding-left: 1px;
    background: #4b4b4b;
}

.set {
    width: 100%;
    height: 29px;
    justify-content: flex-start;
    gap: 10px;
    padding-left: 6px;
    background: #434343;
    color: #eee;
    font-size: 12px;
}

.set .arrow {
    width: 10px;
    margin-right: -6px;
}

.grays {
    display: flex;
    flex-wrap: wrap;
    gap: 2px;
    padding: 1px 0 0 21px;
}

.grays i {
    width: 28px;
    height: 28px;
}

.panel-foot {
    display: flex;
    align-items: center;
    justify-content: flex-end;
    gap: 17px;
    height: 26px;
    padding-right: 28px;
    border-top: 1px solid #3d3d3d;
}

.off {
    color: #999;
}

.properties {
    height: 248px;
    border-top: 3px solid #383838;
}

.layer-kind {
    display: flex;
    align-items: center;
    gap: 5px;
    height: 34px;
    padding: 2px 0 0 10px;
    border-bottom: 1px solid #3d3d3d;
    color: #ccc;
}

.kind-box, .link {
    display: flex;
    align-items: center;
    justify-content: center;
    width: 24px;
    height: 24px;
    border: 1px solid #626262;
    border-radius: 3px;
    background: #383838;
}

.props-body {
    display: flex;
    height: 158px;
}

.props-main {
    flex: 1;
}

.transform {
    height: 117px;
    border-bottom: 1px solid #3d3d3d;
}

h3 {
    display: flex;
    align-items: center;
    gap: 8px;
    height: 31px;
    margin: 0;
    padding: 0 0 3px 6px;
    color: #f0f0f0;
    font-size: 10px;
}

h3 svg {
    color: #bbb;
}

.props-main p {
    margin: 0;
    padding-left: 9px;
    line-height: 12px;
    color: #ccc;
}

.dims {
    display: flex;
    align-items: center;
    gap: 11px;
    padding-left: 9px;
}

.link {
    height: 26px;
}

.dim-grid {
    display: grid;
    grid-template-columns: 15px 70px 13px 53px;
    row-gap: 8px;
    align-items: center;
}

.rotate {
    display: flex;
    align-items: center;
    gap: 14px;
    padding: 11px 0 0 41px;
}

.rotate .combo {
    width: 54px;
    margin: 0 20px 0 -10px;
}

.layers {
    display: flex;
    flex: 1;
    flex-direction: column;
    border-top: 3px solid #383838;
}

.layer-row {
    display: flex;
    align-items: center;
    height: 28px;
    padding-left: 4px;
    border-bottom: 1px solid #3d3d3d;
}

.layer-row.filters {
    height: 32px;
    padding-top: 5px;
}

.kind-wrap {
    position: relative;
}

.kind-wrap svg {
    position: absolute;
    top: 5px;
    left: 8px;
}

.kind {
    width: 87px;
    padding-left: 21px;
}

.filter-icons {
    display: flex;
    align-items: center;
    gap: 12px;
    padding-left: 12px;
}

.toggle {
    width: 9px;
    height: 18px;
    border-radius: 5px;
    background: radial-gradient(circle at 50% 4px, #ddd 4px, #3c3c3c 5px);
}

.blend .drop {
    width: 129px;
    margin-right: 6px;
}

.blend label {
    width: 41px;
}

.layer-row.lock {
    height: 29px;
    padding-left: 6px;
    border: 0;
}

.lock-label {
    width: 32px;
}

.lock-icons {
    display: flex;
    align-items: center;
    gap: 10px;
}

.lock label {
    margin-left: auto;
    margin-right: 5px;
}

.lock .combo {
    margin-right: 54px;
}

.layer-body {
    display: flex;
    flex: 1;
    background: #4e4e4e;
}

.layer-list {
    flex: 1;
    padding-top: 1px;
}

.layer-scroll {
    width: 17px;
    background: #4a4a4a;
}

.layer {
    display: flex;
    height: 33px;
    border-bottom: 1px solid #444;
    background: #535353;
    color: #eee;
}

.eye {
    width: 30px;
    border-right: 1px solid #444;
}

.layer-main {
    display: flex;
    flex: 1;
    align-items: center;
    gap: 9px;
    padding-left: 4px;
}

.layer.on .layer-main {
    background: #696969;
}

.thumbnail {
    position: relative;
    width: 32px;
    height: 24px;
    border: 1px solid #2c2c2c;
    background: #fff;
}

.checks {
    background: repeating-conic-gradient(#ccc 0 25%, #fff 0 50%) 0 0 / 8px 8px;
}

/* corner marks round the selected layer */
.on .thumbnail::after {
    --row: linear-gradient(90deg, #fff 12px, transparent 0 24px, #fff 0);
    --col: linear-gradient(#fff 9px, transparent 0 19px, #fff 0);
    content: "";
    position: absolute;
    inset: -3px;
    background:
        var(--row) top / 100% 1px no-repeat,
        var(--row) bottom / 100% 1px no-repeat,
        var(--col) left / 1px 100% no-repeat,
        var(--col) right / 1px 100% no-repeat;
}

.locked {
    margin-left: auto;
    margin-right: 16px;
}

.layer-foot {
    gap: 15px;
}

.fx {
    font-family: "Liberation Serif", serif;
    font-size: 14px;
    font-style: italic;
    font-weight: bold;
}

/* Taskbar */
.taskbar {
    display: flex;
    flex: none;
    height: 40px;
    background: #d9dadb;
    color: #000;
}

.start {
    width: 48px;
}

.search {
    display: flex;
    align-items: center;
    gap: 11px;
    width: 344px;
    margin-top: 1px;
    padding-left: 11px;
    border: 1px solid #c4c4c4;
    background: #fff;
}

.search input {
    flex: 1;
    outline: 0;
    font-family: "Open Sans", sans-serif;
    font-size: 14px;
}

.search input::placeholder {
    color: #333;
}

.apps {
    display: flex;
}

.apps button {
    width: 49px;
}

.running {
    background: linear-gradient(#0d78d0, #0d78d0) no-repeat bottom / 40px 2px;
}

.running.current {
    background-color: #f0f0f0;
    background-size: 49px 2px;
}

.apps .ps-logo {
    width: 22px;
    height: 22px;
    margin: 0;
    font-size: 12px;
}

.dropbox {
    display: flex;
    align-items: center;
    justify-content: center;
    width: 24px;
    height: 24px;
    border-radius: 3px;
    background: #fff;
    color: #0061fe;
}

.tray {
    display: flex;
    margin-left: auto;
    margin-right: 4px;
    border-right: 1px solid #aaa;
}

.tray button {
    width: 24px;
}

.tray .clock {
    flex-direction: column;
    width: 65px;
    font-family: "Open Sans", sans-serif;
    font-size: 11px;
    line-height: 18px;
}

.tray .notes {
    width: 40px;
    margin-right: 8px;
}
```
